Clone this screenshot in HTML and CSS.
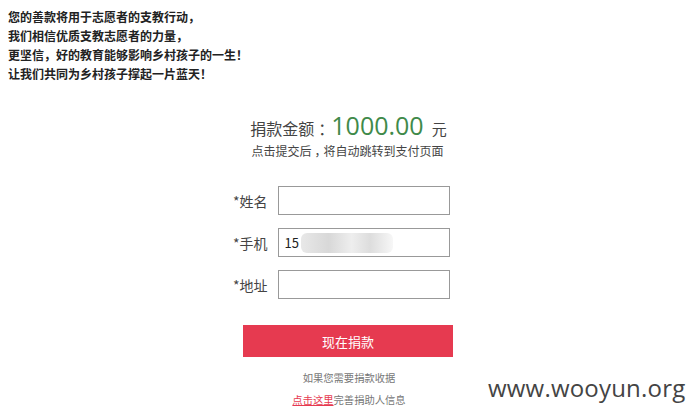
FILE: index.html
```html
<!DOCTYPE html>
<html lang="zh">
<head>
<meta charset="utf-8">
<link rel="stylesheet" href="styles.css">
</head>
<body>
<div class="intro">
  <p>您的善款将用于志愿者的支教行动，</p>
  <p>我们相信优质支教志愿者的力量，</p>
  <p>更坚信，好的教育能够影响乡村孩子的一生！</p>
  <p>让我们共同为乡村孩子撑起一片蓝天！</p>
</div>
<div class="donate">
  <div class="amount"><span class="amount-label">捐款金额<span class="punct">：</span></span><span class="amount-num">1000.00</span><span class="amount-unit">元</span></div>
  <div class="hint">点击提交后<span class="punct">，</span>将自动跳转到支付页面</div>
  <div class="form">
    <div class="row"><label class="label">*姓名</label><div class="input"></div></div>
    <div class="row"><label class="label">*手机</label><div class="input"><span class="phone">15</span><span class="blur"></span></div></div>
    <div class="row"><label class="label">*地址</label><div class="input"></div></div>
  </div>
  <div class="btn">现在捐款</div>
  <div class="note first">如果您需要捐款收据</div>
  <div class="note"><a class="link">点击这里</a>完善捐助人信息</div>
</div>
<div class="watermark">www.wooyun.org</div>
</body>
</html>
```
FILE: styles.css
```css
html, body { margin: 0; padding: 0; background: #fff; }
body { width: 695px; height: 418px; overflow: hidden; position: relative; font-family: "Microsoft YaHei", "Noto Sans CJK SC", sans-serif; }
.intro { padding: 7px 0 0 8px; }
.intro p { margin: 0; font-size: 12px; line-height: 19px; font-weight: bold; color: #222; font-family: "SimSun", "Noto Sans CJK SC", sans-serif; }
.donate { display: flex; flex-direction: column; align-items: center; margin-top: 25px; }
.amount { display: flex; align-items: baseline; color: #444; margin-left: 2px; }
.amount-label { font-size: 16px; }
.punct { font-feature-settings: "halt"; padding: 0 0.25em; }
.amount-num { font-size: 25px; color: #3f8a4a; font-family: "Open Sans", "Noto Sans", sans-serif; margin: 0 8px 0 1px; }
.amount-unit { font-size: 15px; }
.hint { font-size: 12px; color: #444; margin-top: 0; line-height: 17px; }
.form { display: flex; flex-direction: column; gap: 13px; margin-top: 27px; margin-left: -22px; }
.row { display: flex; align-items: center; gap: 10px; }
.label { width: 44px; text-align: right; font-size: 14px; color: #444; }
.input { width: 164px; height: 27px; border: 1px solid #999; display: flex; align-items: center; padding-left: 6px; }
.phone { font-size: 13px; color: #222; }
.blur { width: 92px; height: 20px; margin-left: 2px; background: linear-gradient(90deg, #e8e8e8 0, #d8d8d8 30%, #eee 55%, #ddd 75%, #f7f7f7 100%); border-radius: 6px; }
.btn { width: 210px; height: 32px; margin-top: 26px; margin-left: 1px; background: #e63a50; color: #fff; font-size: 13px; display: flex; align-items: center; justify-content: center; }
.note { font-size: 10.3px; color: #777; line-height: 22px; margin-left: 3px; }
.note.first { margin-top: 10px; }
.link { color: #e63a50; text-decoration: underline; }
.watermark { position: absolute; left: 488px; top: 371px; font-size: 24px; color: #444; font-family: "Open Sans", "Noto Sans", sans-serif; letter-spacing: 0.2px; }
```
